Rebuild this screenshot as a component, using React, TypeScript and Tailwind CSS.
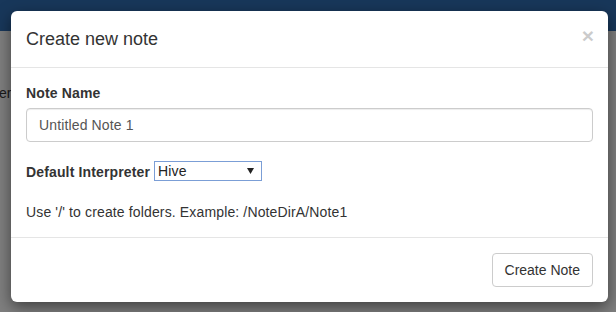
export default function App() {
  return (
    <div className="relative w-[616px] h-[312px] overflow-hidden bg-[#7f7f7f] font-['Liberation_Sans',Arial,sans-serif] text-[14px] text-[#333]">
      {/* page behind the backdrop */}
      <div className="h-[31px] bg-[#18375a]"></div>
      <div className="pt-[52px] -ml-[1px] text-[14px] leading-[20px] text-[#1a1a1a]">er</div>

      {/* modal */}
      <div className="absolute left-[11px] top-[11px] w-[597px] rounded-[6px] bg-white shadow-[0_5px_15px_rgba(0,0,0,0.5)]">
        <div className="flex items-start justify-between border-b border-[#e5e5e5] p-[15px]">
          <h4 className="text-[18px] leading-[26px]">Create new note</h4>
          <button className="mt-[-3px] mr-[-1px] text-[21px] font-bold leading-[26px] text-black opacity-20">×</button>
        </div>

        <div className="p-[15px] tracking-[0.14px]">
          <div className="mb-[15px]">
            <label className="mb-[5px] block font-bold leading-[20px]">Note Name</label>
            <input
              readOnly
              placeholder="Untitled Note 1"
              className="block h-[34px] w-full rounded-[4px] border border-[#ccc] px-[12px] text-[14px] tracking-[0.14px] text-[#555] placeholder:text-[#555] shadow-[inset_0_1px_1px_rgba(0,0,0,0.075)] outline-none"
            />
          </div>

          <div className="flex items-center pt-[4px]">
            <label className="mr-[4px] font-bold leading-[20px]">Default Interpreter</label>
            <div className="relative">
              <select className="h-[20px] w-[108px] appearance-none border border-[#7b9ed6] bg-white pl-[3px] text-[14px] leading-[18px] text-[#222] outline-none">
                <option>Hive</option>
              </select>
              <svg className="pointer-events-none absolute right-[8px] top-[7px]" width="7" height="6" viewBox="0 0 7 6">
                <path d="M0 0h7L3.5 6z" fill="#222" />
              </svg>
            </div>
          </div>

          <p className="mt-[20px] leading-[20px]">Use '/' to create folders. Example: /NoteDirA/Note1</p>
        </div>

        <div className="flex justify-end border-t border-[#e5e5e5] p-[15px]">
          <button className="h-[34px] rounded-[4px] border border-[#ccc] bg-white px-[12px] text-[14px] text-[#333]">
            Create Note
          </button>
        </div>
      </div>
    </div>
  );
}
